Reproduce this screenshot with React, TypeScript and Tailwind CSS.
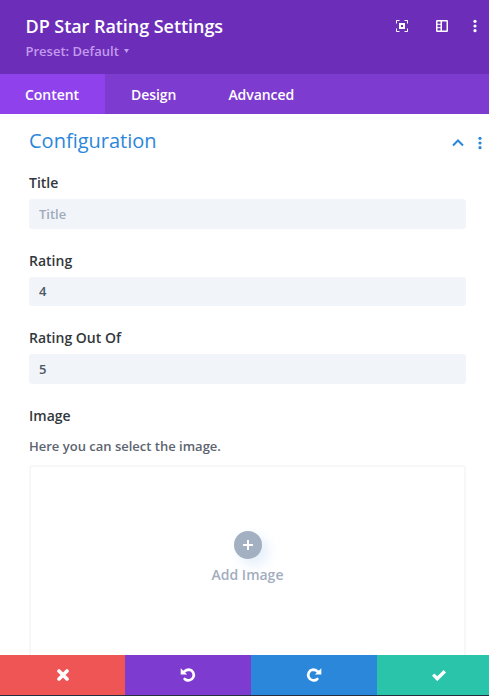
import { useState } from 'react';

const tabs = ["Content", "Design", "Advanced"];

function App() {

    const [activeTab, setActiveTab] = useState<string>("Content");
    const [title, setTitle] = useState<string>("");
    const [rating, setRating] = useState<string>("4");
    const [outOf, setOutOf] = useState<string>("5");

    const fields = [
        { id: "title", label: "Title", placeholder: "Title", value: title, onChange: setTitle },
        { id: "rating", label: "Rating", placeholder: "", value: rating, onChange: setRating },
        { id: "outOf", label: "Rating Out Of", placeholder: "", value: outOf, onChange: setOutOf }
    ]

    const printDots = () => {
        return (
            <svg viewBox="0 0 4 14" className="h-3.5 w-1" fill="currentColor">
                <circle cx="2" cy="2.300" r="1.6" />
                <circle cx="2" cy="7" r="1.6" />
                <circle cx="2" cy="11.700" r="1.6" />
            </svg>
        )
    }

    return (
        <div className="flex h-[696px] w-[489px] flex-col overflow-hidden bg-white font-['Open_Sans',sans-serif] font-semibold">

            <header className="flex h-[74px] shrink-0 justify-between bg-[#6c2eb9] pl-[25.500px] pr-3 text-white">
                <div className="pt-[14px]">
                    <h1 className="text-[18px] leading-6 tracking-[-0.05px] whitespace-nowrap">DP Star Rating Settings</h1>
                    <button className="mt-1 flex items-center gap-[5px] text-[13px] leading-[18px] text-[#c49aee]">
                        Preset: Default
                        <svg viewBox="0 0 5 4" className="h-1 w-[5px]" fill="currentColor"><path d="M0 0h5L2.5 4z" /></svg>
                    </button>
                </div>
                <div className="flex h-[52px] items-center">
                    <svg viewBox="0 0 12 12" className="mr-7 size-3" fill="none" stroke="currentColor">
                        <path d="M.5 3.5v-3h3M8.500 .5h3v3M11.500 8.500v3h-3M3.500 11.500h-3v-3" />
                        <rect x="4" y="4" width="4" height="4" strokeWidth="2" />
                    </svg>
                    <svg viewBox="0 0 12 12" className="mr-[25px] size-3" fill="none" stroke="currentColor">
                        <rect x=".75" y=".75" width="10.5" height="10.5" rx=".5" strokeWidth="1.500" />
                        <path d="M5.250 1v10" strokeWidth="1.500" />
                        <path d="M1 4.300h4M1 7.700h4" />
                    </svg>
                    {printDots()}
                </div>
            </header>

            <nav className="flex h-10 shrink-0 bg-[#7e3bd0] text-[14px] text-white">
                {
                    tabs.map((tab) => (
                        <button
                            key={tab}
                            onClick={() => setActiveTab(tab)}
                            className={`px-[26px] pt-px tracking-[-0.05px] first:pl-[25px] ${activeTab === tab ? "bg-[#8f42ec]" : ""}`}
                        >
                            {tab}
                        </button>
                    ))
                }
            </nav>

            <main className="flex min-h-0 flex-1 flex-col overflow-hidden pr-[23px] pl-[29px]">
                <div className="-mr-[18px] flex h-[57px] shrink-0 items-center text-[#2b87da]">
                    <h2 className="flex-1 pb-[3px] text-[20px] font-normal">Configuration</h2>
                    <svg viewBox="0 0 12 8" className="mr-[14px] h-2 w-3" fill="none" stroke="currentColor" strokeWidth="2">
                        <path d="m1 6.500 5-5 5 5" />
                    </svg>
                    <span className="mr-[2px]">{printDots()}</span>
                </div>

                {
                    fields.map((field) => (
                        <div key={field.id} className="mb-[20.200px] shrink-0">
                            <label htmlFor={field.id} className="block h-[28px] pt-[2px] text-[14px] leading-5 text-[#32373c]">{field.label}</label>
                            <input
                                id={field.id}
                                value={field.value}
                                placeholder={field.placeholder}
                                onChange={(e) => field.onChange(e.target.value)}
                                className="block h-[29.500px] w-full rounded-[3px] bg-[#f1f5f9] px-2.5 text-[13px] text-[#4c5866] outline-none placeholder:text-[#a0aab9]"
                            />
                        </div>
                    ))
                }

                <h3 className="pt-0.5 text-[14px] leading-5 text-[#32373c]">Image</h3>
                <p className="mt-2.5 text-[13px] leading-5 text-[#5c6470]">Here you can select the image.</p>
                <button className="mt-[9px] flex h-[216px] shrink-0 flex-col items-center rounded-[3px] border-2 border-[#f5f7f8] pt-[63.500px] text-[14px] text-[#a3adbd]">
                    <span className="flex size-7 items-center justify-center rounded-full bg-[#a2b0c1] text-white shadow-[6px_6px_14px_#e2edfa]">
                        <svg viewBox="0 0 10 10" className="size-2.5" fill="none" stroke="currentColor" strokeWidth="2"><path d="M5 0v10M0 5h10" /></svg>
                    </span>
                    <span className="mt-[6px] leading-5">Add Image</span>
                </button>
            </main>

            <footer className="grid h-[41px] shrink-0 grid-cols-[125px_126px_126px_112px] border-b-[1.5px] border-[#25303f] text-white">
                <button className="flex items-center justify-center bg-[#ef5555]">
                    <svg viewBox="0 0 12 12" className="size-3" fill="none" stroke="currentColor" strokeWidth="3.600" strokeLinecap="round"><path d="m2 2 8 8M10 2l-8 8" /></svg>
                </button>
                <button className="flex items-center justify-center bg-[#7e3bd0]">
                    <svg viewBox="0 0 16 16" className="size-4" fill="none" stroke="currentColor" strokeWidth="2.700">
                        <path d="M4 4.700C6 3 7.500 2.600 9 2.600a5.400 5.400 0 1 1-4.300 9.300" strokeLinecap="round" />
                        <path d="M.700 1.200v6.300H7.200L4.800 5.200 2.800 3.200z" fill="currentColor" stroke="none" />
                    </svg>
                </button>
                <button className="flex items-center justify-center bg-[#2b87da]">
                    <svg viewBox="0 0 16 16" className="size-4" fill="none" stroke="currentColor" strokeWidth="2.700">
                        <path d="M12 4.700C10 3 8.500 2.600 7 2.600a5.400 5.400 0 1 0 4.300 9.300" strokeLinecap="round" />
                        <path d="M15.300 1.200v6.300H8.800L11.200 5.200 13.200 3.200z" fill="currentColor" stroke="none" />
                    </svg>
                </button>
                <button className="flex items-center justify-center bg-[#29c4a9] pl-3">
                    <svg viewBox="0 0 14 12" className="h-3 w-3.5" fill="none" stroke="currentColor" strokeWidth="3.400"><path d="m1.200 5.600 4.100 4.100 7.500-7.500" /></svg>
                </button>
            </footer>
        </div>
    )
}

export default App
